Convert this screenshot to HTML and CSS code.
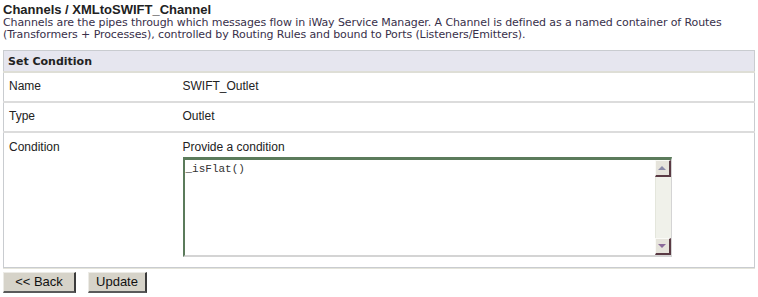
FILE: index.html
```html
<!DOCTYPE html>
<html lang="en">

<head>
  <meta charset="UTF-8">
  <title>Channels / XMLtoSWIFT_Channel</title>
  <link rel="stylesheet" href="styles.css">
</head>

<body>
  <h1 class="page-title">Channels / XMLtoSWIFT_Channel</h1>
  <p class="page-desc">Channels are the pipes through which messages flow in iWay Service Manager. A Channel is defined as a named container of Routes<br>(Transformers + Processes), controlled by Routing Rules and bound to Ports (Listeners/Emitters).</p>

  <!-- Condition form -->
  <table class="panel">
    <thead>
      <tr>
        <th colspan="2">Set Condition</th>
      </tr>
    </thead>
    <tbody>
      <tr class="row">
        <td class="label">Name</td>
        <td>SWIFT_Outlet</td>
      </tr>
      <tr class="row">
        <td class="label">Type</td>
        <td>Outlet</td>
      </tr>
      <tr class="row cond-row">
        <td class="label">Condition</td>
        <td>
          <div class="hint">Provide a condition</div>
          <div class="cond-box">
            <textarea class="cond-input" spellcheck="false">_isFlat()</textarea>
            <div class="scroll">
              <div class="scroll-btn"><span class="arrow-up"></span></div>
              <div class="scroll-track"></div>
              <div class="scroll-btn"><span class="arrow-down"></span></div>
            </div>
          </div>
        </td>
      </tr>
    </tbody>
  </table>

  <div class="actions">
    <button type="button" class="btn btn-back">&lt;&lt; Back</button>
    <button type="button" class="btn btn-update">Update</button>
  </div>
</body>

</html>
```

FILE: styles.css
```css
body {
  margin: 0;
  padding: 2px 3px;
  background-color: #fff;
  color: #000;
  font-family: 'Liberation Sans', Arial, sans-serif;
}

.page-title {
  margin: 0;
  font-size: 13px;
  line-height: 15px;
  font-weight: bold;
  color: #222;
}

.page-desc {
  margin: 0;
  font-family: 'DejaVu Sans', Verdana, sans-serif;
  font-size: 11px;
  line-height: 12px;
  color: #38304a;
  letter-spacing: -0.1px;
}

.panel {
  width: 752px;
  margin-top: 9px;
  border-collapse: collapse;
  border: 1px solid #c9ccd0;
  box-shadow: 0 1px 0 #e4e4da;
}

.panel th {
  height: 20px;
  padding: 0 0 0 4px;
  text-align: left;
  background-color: #e6e6ef;
  font-family: 'DejaVu Sans', Verdana, sans-serif;
  font-size: 11px;
  font-weight: bold;
  color: #222;
  border-bottom: 2px solid #deded6;
}

.row td {
  height: 30px;
  padding: 6px 0 0;
  box-sizing: border-box;
  vertical-align: top;
  font-size: 12px;
  line-height: 14px;
  color: #222;
  border-bottom: 2px solid #dcdcdc;
}

.row td:first-child {
  width: 179px;
  padding-left: 5px;
}

.cond-row td {
  height: 135px;
  border-bottom: none;
  padding-top: 7px;
}

.hint {
  height: 17px;
}

.cond-box {
  display: flex;
  width: 489px;
  height: 100px;
  box-sizing: border-box;
  border-top: 3px solid #5b7b5b;
  border-left: 2px solid #5b7b5b;
  border-right: 1px solid #d4d4d4;
  border-bottom: 2px solid #d4d4d4;
}

.cond-input {
  flex: 1;
  margin: 0;
  padding: 3px 1px;
  border: none;
  outline: none;
  resize: none;
  overflow: hidden;
  font-family: 'Liberation Mono', 'Courier New', monospace;
  font-size: 11px;
  line-height: 13px;
  color: #333;
}

.scroll {
  width: 16px;
  display: flex;
  flex-direction: column;
  background-color: #eef0e6;
}

.scroll-btn {
  height: 17px;
  box-sizing: border-box;
  display: flex;
  align-items: center;
  justify-content: center;
  background-color: #e6e4dc;
  border-top: 1px solid #fafaf6;
  border-left: 1px solid #fafaf6;
  border-right: 2px solid #5a3a44;
  border-bottom: 2px solid #5a3a44;
}

.scroll-track {
  flex: 1;
  background-color: #f0f1ea;
  border-left: 1px solid #e4e6dc;
}

.arrow-up,
.arrow-down {
  width: 0;
  height: 0;
  border-left: 4px solid transparent;
  border-right: 4px solid transparent;
}

.arrow-up {
  border-bottom: 4px solid #8a8aa8;
}

.arrow-down {
  border-top: 4px solid #8a6a9a;
}

.actions {
  display: flex;
  gap: 12px;
  margin-top: 4px;
}

.btn {
  height: 21px;
  padding: 0;
  background-color: #d6d3c9;
  border-top: 1px solid #ecebe6;
  border-left: 1px solid #ecebe6;
  border-right: 2px solid #3c3c3c;
  border-bottom: 2px solid #5a5a5a;
  font-family: 'Liberation Sans', Arial, sans-serif;
  font-size: 13px;
  color: #111;
}

.btn-back {
  width: 73px;
}

.btn-update {
  width: 59px;
}
```
